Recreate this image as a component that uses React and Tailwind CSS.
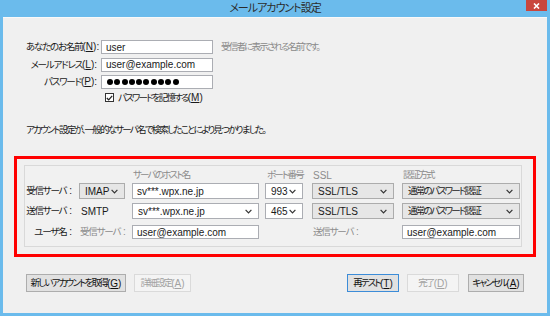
const F = "font-['Liberation_Sans','Noto_Sans_CJK_JP',sans-serif]";
// Japanese runs: proportional kana + tight tracking to get the narrow Meiryo UI look
const JA = 'text-[9.5px] tracking-[-1.8px] [font-feature-settings:"palt"] whitespace-nowrap';
const JA_LABEL = 'text-[9.5px] tracking-[-1.2px] [font-feature-settings:"palt"] whitespace-nowrap';

const COLS = [
  "w-[47px] shrink-0",
  "ml-[7px] w-[46px] shrink-0",
  "ml-[7px] w-[127px] shrink-0",
  "ml-[6px] w-[38px] shrink-0",
  "ml-[9px] w-[82px] shrink-0",
  "ml-[8px] w-[118px] shrink-0",
];

function Chevron() {
  return (
    <svg width="7" height="5" viewBox="0 0 7 5" className="shrink-0">
      <path d="M0.6 0.8 L3.5 3.8 L6.4 0.8" fill="none" stroke="#333" strokeWidth="1.2" />
    </svg>
  );
}

function Select({ children, white }) {
  return (
    <div
      className={`w-full h-full flex items-center justify-between pl-[5px] pr-[6px] border ${
        white ? "bg-white border-[#abadb3]" : "bg-[#e6e6e6] border-[#acacac]"
      }`}
    >
      <span className="whitespace-nowrap">{children}</span>
      <Chevron />
    </div>
  );
}

function Input({ value, className = "" }) {
  return (
    <div className={`h-[14px] flex items-center px-[4px] bg-white border border-[#abadb3] whitespace-nowrap ${className}`}>
      {value}
    </div>
  );
}

function Row({ cells, className = "" }) {
  return (
    <div className={`flex items-center ${className}`}>
      {cells.map((c, i) => (
        <div key={i} className={`${COLS[i]} h-full flex items-center`}>
          {c}
        </div>
      ))}
    </div>
  );
}

function Label({ text, k }) {
  return (
    <span className="whitespace-nowrap">
      <span className={JA_LABEL}>{text}</span>(<u>{k}</u>):
    </span>
  );
}

function ColonLabel({ text, className = "" }) {
  return (
    <span className={`whitespace-nowrap ${className}`}>
      <span className={JA_LABEL}>{text}</span> :
    </span>
  );
}

function Btn({ text, k, w, kind }) {
  const look =
    kind === "disabled"
      ? "bg-[#f4f4f4] border-[#dadada] text-[#a2a2a2]"
      : kind === "focus"
      ? "bg-[#e1e1e1] border-[#3c8cd8] text-[#111]"
      : "bg-[#e1e1e1] border-[#adadad] text-[#111]";
  return (
    <div className={`${w} h-[18px] border flex items-center justify-center whitespace-nowrap ${look}`}>
      <span className={JA}>{text}</span>(<u>{k}</u>)
    </div>
  );
}

export default function App() {
  return (
    <div className={`w-[550px] h-[316px] bg-[#6bbbec] flex flex-col ${F} text-[10px] text-[#1a1a1a]`}>
      {/* title bar */}
      <div className="h-[17px] shrink-0 flex items-center justify-center relative">
        <span className='text-[11px] text-[#2b2b2b] tracking-[-1px] [font-feature-settings:"palt"]'>メールアカウント設定</span>
        <div className="absolute right-[3px] top-0 w-[21px] h-[11px] bg-[#c9463d] flex items-center justify-center">
          <svg width="7" height="6" viewBox="0 0 7 6">
            <path d="M1 0.5 L6 5.5 M6 0.5 L1 5.5" stroke="#fff" strokeWidth="1.6" />
          </svg>
        </div>
      </div>

      {/* client area */}
      <div className="flex-1 mx-[3px] mb-[3px] bg-[#f0f0f0] border-t border-[#f9f9f9] px-[11px] pt-[22px] flex flex-col">
        <div className="pl-[12px] flex flex-col">
          <div className="flex flex-col gap-[3.5px]">
            <div className="flex items-center h-[14px]">
              <div className="w-[71px] shrink-0 text-right">
                <Label text="あなたのお名前" k="N" />
              </div>
              <Input value="user" className="ml-[4px] w-[112px]" />
              <span className={`ml-[8px] text-[#8a8a8a] ${JA}`}>受信者に表示される名前です。</span>
            </div>
            <div className="flex items-center h-[14px]">
              <div className="w-[71px] shrink-0 text-right">
                <Label text="メールアドレス" k="L" />
              </div>
              <Input value="user@example.com" className="ml-[4px] w-[112px]" />
            </div>
            <div className="flex items-center h-[14px]">
              <div className="w-[71px] shrink-0 text-right">
                <Label text="パスワード" k="P" />
              </div>
              <div className="ml-[4px] w-[112px] h-[14px] flex items-center gap-[1.3px] px-[5px] bg-white border border-[#abadb3]">
                {Array.from({ length: 10 }).map((_, i) => (
                  <span key={i} className="w-[6px] h-[6px] rounded-full bg-black" />
                ))}
              </div>
            </div>
          </div>

          <div className="mt-[3px] h-[11px] flex items-center pl-[79px]">
            <div className="w-[9px] h-[9px] border border-[#333] bg-white flex items-center justify-center">
              <svg width="7" height="6" viewBox="0 0 7 6">
                <path d="M0.8 3 L2.7 4.9 L6.2 0.9" fill="none" stroke="#222" strokeWidth="1.3" />
              </svg>
            </div>
            <span className="ml-[4px] whitespace-nowrap">
              <span className={JA}>パスワードを記憶する</span>(<u>M</u>)
            </span>
          </div>

          <div className={`mt-[21px] h-[12px] flex items-center ${JA}`}>
            アカウント設定が、一般的なサーバ名で検索したことにより見つかりました。
          </div>
        </div>

        {/* highlighted server settings */}
        <div className="mt-[20px] h-[101px] shrink-0 border-[3px] border-[#ff0000] pt-[6px] pl-[7px] pr-[11px] pb-[7px] flex">
          <div className="flex-1 border border-[#d9d9d9] bg-[#f1f1f1] pt-[2px] flex flex-col">
            <Row
              className="h-[14px] text-[#8c8c8c]"
              cells={[
                null,
                null,
                <span className={`pl-[1px] ${JA}`}>サーバのホスト名</span>,
                <span className={`pl-[2px] ${JA}`}>ポート番号</span>,
                <span className="pl-[1px]">SSL</span>,
                <span className={`pl-[1px] ${JA}`}>認証方式</span>,
              ]}
            />
            <Row
              className="h-[16px] mt-[1px]"
              cells={[
                <ColonLabel text="受信サーバ" className="w-full text-right" />,
                <Select>IMAP</Select>,
                <Input value="sv***.wpx.ne.jp" className="w-full h-full" />,
                <Select white>993</Select>,
                <Select>SSL/TLS</Select>,
                <Select>
                  <span className={JA}>通常のパスワード認証</span>
                </Select>,
              ]}
            />
            <Row
              className="h-[16px] mt-[4px]"
              cells={[
                <ColonLabel text="送信サーバ" className="w-full text-right" />,
                <span className="pl-[2px]">SMTP</span>,
                <Select white>sv***.wpx.ne.jp</Select>,
                <Select white>465</Select>,
                <Select>SSL/TLS</Select>,
                <Select>
                  <span className={JA}>通常のパスワード認証</span>
                </Select>,
              ]}
            />
            <Row
              className="h-[16px] mt-[5px]"
              cells={[
                <ColonLabel text="ユーザ名" className="w-full text-right" />,
                <ColonLabel text="受信サーバ" className="pl-[1px] text-[#8c8c8c]" />,
                <Input value="user@example.com" className="w-full" />,
                null,
                <ColonLabel text="送信サーバ" className="pl-[1px] text-[#8c8c8c]" />,
                <Input value="user@example.com" className="w-full" />,
              ]}
            />
          </div>
        </div>

        {/* buttons */}
        <div className="mt-[17px] h-[18px] px-[12px] flex justify-between">
          <div className="flex">
            <Btn w="w-[100px]" text="新しいアカウントを取得" k="G" />
            <div className="ml-[8px]">
              <Btn w="w-[57px]" kind="disabled" text="詳細設定" k="A" />
            </div>
          </div>
          <div className="flex">
            <Btn w="w-[52px]" kind="focus" text="再テスト" k="T" />
            <div className="ml-[8px]">
              <Btn w="w-[52px]" kind="disabled" text="完了" k="D" />
            </div>
            <div className="ml-[9px]">
              <Btn w="w-[56px]" text="キャンセル" k="A" />
            </div>
          </div>
        </div>
      </div>
    </div>
  );
}
